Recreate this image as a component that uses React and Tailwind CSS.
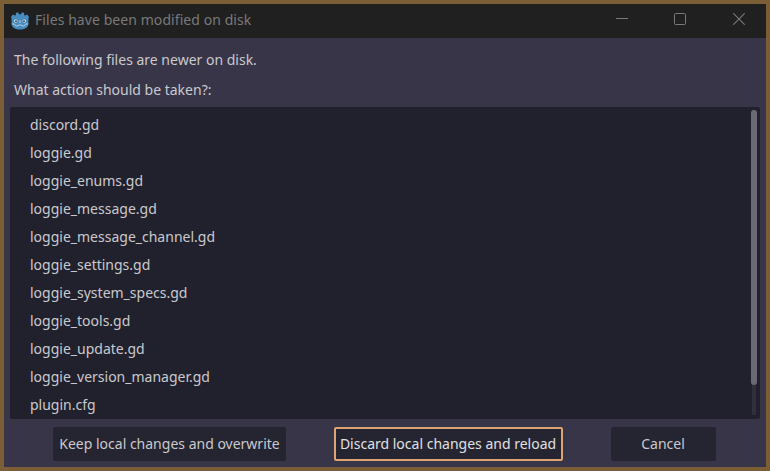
const files = [
  'discord.gd',
  'loggie.gd',
  'loggie_enums.gd',
  'loggie_message.gd',
  'loggie_message_channel.gd',
  'loggie_settings.gd',
  'loggie_system_specs.gd',
  'loggie_tools.gd',
  'loggie_update.gd',
  'loggie_version_manager.gd',
  'plugin.cfg',
];

function GodotIcon() {
  return (
    <svg className="h-[18px] w-[18px] shrink-0" viewBox="0 0 18 18" aria-hidden="true">
      <path
        d="M0 5 1.8 2.6 4 3.4 5 3 4.8 1 7 .2 8.1 2.2H9.9L11 .2 13.2 1 13 3 14 3.4 16.2 2.6 18 5 17.4 7V12.6C17 15.6 13.4 17.6 9 17.6S1 15.6.6 12.6V7Z"
        fill="#478cbf"
      />
      <path d="M.8 11.8 3.8 12.3 4.6 13.8 7.2 14 7.7 12.9H10.3L10.8 14 13.4 13.8 14.2 12.3 17.2 11.8" fill="none" stroke="#c4dbea" strokeWidth=".8" />
      <circle cx="4.8" cy="9.1" r="1.7" fill="#eef3f6" />
      <circle cx="13.2" cy="9.1" r="1.7" fill="#eef3f6" />
      <circle cx="5" cy="9.2" r="1" fill="#414042" />
      <circle cx="13" cy="9.2" r="1" fill="#414042" />
      <path d="M9 8.8v1.8" stroke="#d9e7f1" strokeWidth=".8" strokeLinecap="round" />
    </svg>
  );
}

function TitleBar() {
  return (
    <header className="flex h-[34px] shrink-0 items-center bg-[#202020] pl-[7px] text-[#797979]">
      <GodotIcon />
      <h1 className="ml-[6px] pb-[2px] text-[14px] leading-[20px] tracking-[0.07px] whitespace-pre">Files have been modified on disk</h1>
      <div className="ml-auto flex items-center pr-[21px] pb-[4px]">
        <svg className="mr-[46px] h-3 w-3" viewBox="0 0 12 12" aria-label="Minimize">
          <path d="M0 5.5h12" stroke="currentColor" />
        </svg>
        <svg className="mr-[47px] h-3 w-3" viewBox="0 0 12 12" fill="none" aria-label="Maximize">
          <rect x=".5" y=".5" width="11" height="11" rx="1" stroke="currentColor" />
        </svg>
        <svg className="h-3 w-3" viewBox="0 0 12 12" aria-label="Close">
          <path d="m.3.3 11.4 11.4M11.7.3.3 11.7" stroke="currentColor" strokeWidth="1.1" />
        </svg>
      </div>
    </header>
  );
}

function FileList() {
  return (
    <div className="mt-[2px] flex h-[312px] justify-between rounded-[2px] bg-[#21212d] pr-[3px]">
      <ul className="pt-[4px] pl-[20px]">
        {files.map((name) => (
          <li key={name} className="h-7 leading-[28px]">{name}</li>
        ))}
      </ul>
      <div className="mt-[3px] flex h-[305px] w-[6px] justify-center bg-[linear-gradient(#302f3b,#302f3b)] bg-[length:4px_100%] bg-center bg-no-repeat">
        <div className="h-[275px] w-[6px] rounded-full bg-[#6b6a72]" />
      </div>
    </div>
  );
}

export default function App() {
  return (
    <div className="flex h-[471px] w-[770px] flex-col overflow-hidden border-4 border-[#7b5e36] bg-[#383549] font-['Noto_Sans',sans-serif] text-[14px] text-[#cac9cd]">
      <TitleBar />
      <main className="px-[6px] pt-[7px]">
        <p className="h-[30px] pl-[4px] leading-[30px]">The following files are newer on disk.</p>
        <p className="h-[30px] pl-[4px] leading-[30px]">What action should be taken?:</p>
        <FileList />
        <div className="mt-2 flex gap-12 pl-[43px] whitespace-nowrap">
          <button className="h-[34px] w-[233px] rounded-[2px] bg-[#252431] pb-[2px]">Keep local changes and overwrite</button>
          <button className="h-[34px] w-[229px] rounded-[2px] border-2 border-[#e0a470] bg-[#252431] pr-px pb-[2px] text-[#e0e0e2]">Discard local changes and reload</button>
          <button className="h-[34px] w-[105px] rounded-[2px] bg-[#252431] pr-px pb-[2px]">Cancel</button>
        </div>
      </main>
    </div>
  );
}
